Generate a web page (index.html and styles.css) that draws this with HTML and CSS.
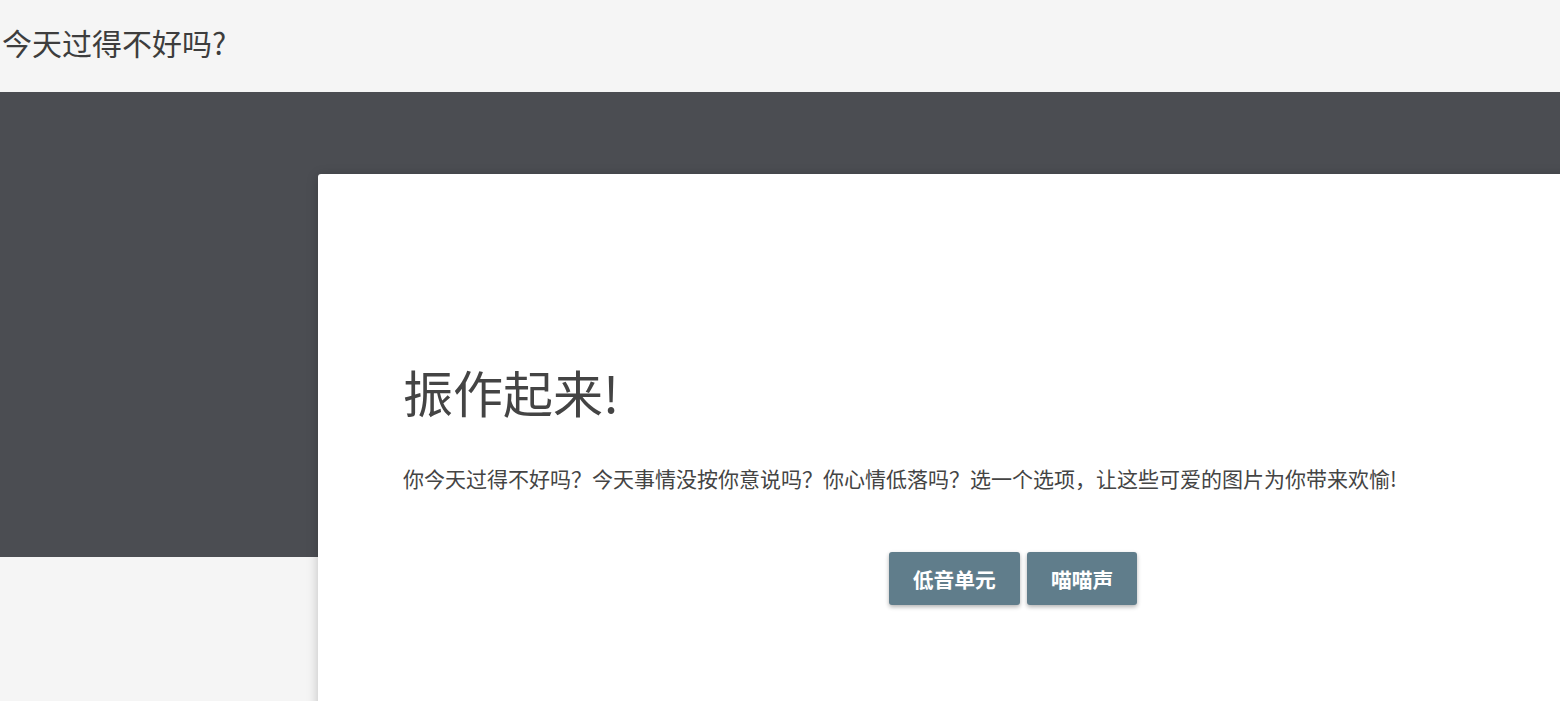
FILE: index.html
```html
<!DOCTYPE html>
<html lang="zh">

<head>
    <meta charset="UTF-8">
    <meta name="viewport" content="width=device-width, initial-scale=1.0">
    <title>今天过得不好吗?</title>
    <link rel="stylesheet" href="styles.css">
</head>

<body>
    <header class="topbar">
        <h2>今天过得不好吗?</h2>
    </header>

    <div class="band"></div>

    <main class="card">
        <h1>振作起来!</h1>
        <p>你今天过得不好吗？今天事情没按你意说吗？你心情低落吗？选一个选项，让这些可爱的图片为你带来欢愉!</p>
        <div class="choices">
            <button class="btn">低音单元</button>
            <button class="btn">喵喵声</button>
        </div>
    </main>
</body>

</html>
```

FILE: styles.css
```css
html,
body {
    overflow: hidden;
}

body {
    margin: 0;
    background-color: #f5f5f5;
    font-family: "Noto Sans CJK SC", sans-serif;
    color: #444;
    height: 701px;
    position: relative;
}

.topbar {
    height: 84px;
    padding: 0 0 8px 2px;
    display: flex;
    align-items: center;
}

.topbar h2 {
    margin: 0;
    font-size: 30px;
    font-weight: 400;
    line-height: 40px;
    color: #3d3d3d;
}

.band {
    height: 465px;
    background-color: #4b4d52;
}

/* card sits over the dark band */
.card {
    position: absolute;
    top: 174px;
    left: 318px;
    width: 1220px;
    height: 600px;
    padding: 187px 85px 0;
    background-color: #fff;
    border-radius: 3px;
    box-shadow: 0 2px 12px rgba(0, 0, 0, 0.22);
}

.card h1 {
    margin: 0;
    font-size: 50px;
    font-weight: 400;
    line-height: 60px;
    color: #444;
}

.card p {
    margin: 42px 0 0;
    font-size: 21px;
    line-height: 30px;
    color: #444;
}

.choices {
    margin-top: 59px;
    display: flex;
    justify-content: center;
    gap: 7px;
}

.btn {
    height: 53px;
    padding: 0 24px;
    border: none;
    border-radius: 3px;
    background-color: #607d8b;
    color: #fff;
    font-family: "Noto Sans CJK SC", sans-serif;
    font-size: 20.8px;
    font-weight: 700;
    box-shadow: 0 2px 4px rgba(0, 0, 0, 0.3);
    cursor: pointer;
}
```
